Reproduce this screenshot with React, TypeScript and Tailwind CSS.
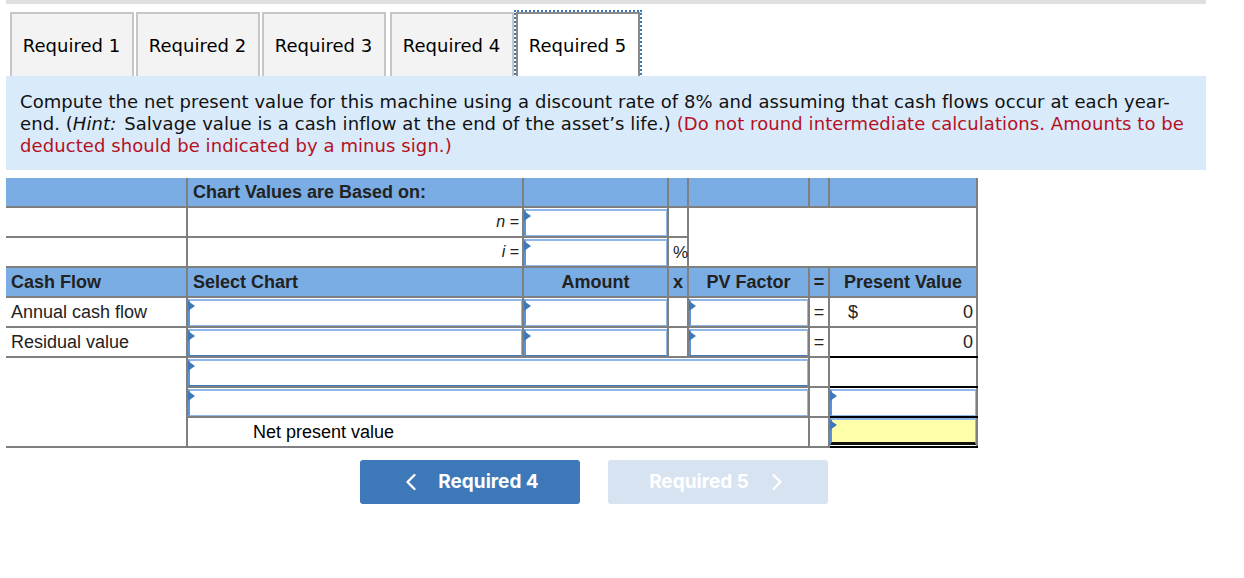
import React from "react";
import { ChevronLeft, ChevronRight } from "lucide-react";

const bd = "border-2 border-[#7f7f7f]";
const hd = "bg-[#7aade3] font-bold text-[#222]";

function Field({ yellow = false, dark = false }: { yellow?: boolean; dark?: boolean }) {
  return (
    <div
      className={`relative h-[27px] w-full border border-l-2 border-t-2 border-[#8fb8e8] border-l-[#5b93d3] ${yellow ? "border-b-[3px] border-b-[#111] bg-[#ffffaa]" : "bg-white"} ${dark && !yellow ? "border-b-[#3d78b8]" : ""}`}
    >
      <span className="absolute left-[-2px] top-[0px] h-0 w-0 border-y-[5px] border-l-[7px] border-y-transparent border-l-[#3d78b8]" />
    </div>
  );
}

function Tab({ label, active, ml = "" }: { label: string; active?: boolean; ml?: string }) {
  return (
    <div
      className={`flex h-[64px] w-[124px] items-center justify-center border-2 border-b-0 pr-[1px] text-[18px] text-black ${ml} ${
        active
          ? "border-[#8a8a8a] bg-white outline-2 outline-dotted outline-[#3d78b8]"
          : "border-[#c6c6c6] bg-[#f3f3f3]"
      }`}
    >
      {label}
    </div>
  );
}

export default function App() {
  return (
    <div className="h-[578px] w-[1244px] overflow-hidden bg-white pl-[6px] font-['DejaVu_Sans',Verdana,sans-serif]">
      <div className="h-[4px] w-[1200px] bg-[#e0e0e0]" />
      <div className="flex items-start pl-[4px] pt-[8px]">
        <Tab label="Required 1" />
        <Tab label="Required 2" ml="ml-[2px]" />
        <Tab label="Required 3" ml="ml-[2px]" />
        <Tab label="Required 4" ml="ml-[4px]" />
        <Tab label="Required 5" ml="ml-[2px]" active />
      </div>
      <div className="relative h-[94px] w-[1200px] whitespace-nowrap bg-[#d9eafa] px-[14px] pt-[15px] text-[18px] leading-[22px] tracking-[0.08px] text-[#111]">
        Compute the net present value for this machine using a discount rate of 8% and assuming that cash flows occur at each year-
        <br />
        end. (<i className="pr-[2px]">Hint:</i> Salvage value is a cash inflow at the end of the asset’s life.){" "}
        <span className="text-[#b5101e]">
          (Do not round intermediate calculations. Amounts to be
          <br />
          deducted should be indicated by a minus sign.)
        </span>
      </div>

      <table className="mt-[8px] w-[971px] table-fixed border-collapse font-['Liberation_Sans',Arial,sans-serif] text-[18px] leading-[22px] text-[#222]">
        <colgroup>
          <col className="w-[181px]" />
          <col className="w-[336px]" />
          <col className="w-[145px]" />
          <col className="w-[20px]" />
          <col className="w-[121px]" />
          <col className="w-[20px]" />
          <col className="w-[148px]" />
        </colgroup>
        <tbody>
          <tr className="h-[29px]">
            <td className={`${hd} border-b-2 border-r-2 border-[#7f7f7f] pl-[5px]`} />
            <td className={`${hd} ${bd} border-t-0 pl-[5px]`}>Chart Values are Based on:</td>
            <td className={`${hd} ${bd} border-t-0`} />
            <td className={`${hd} ${bd} border-t-0`} />
            <td className={`${hd} ${bd} border-t-0`} />
            <td className={`${hd} ${bd} border-t-0`} />
            <td className={`${hd} ${bd} border-t-0`} />
          </tr>
          <tr className="h-[30px]">
            <td className="border-y-2 border-r-2 border-[#7f7f7f]" />
            <td className={`${bd} pr-[3px] text-right text-[16px]`}><i>n</i> =</td>
            <td className={bd}><Field /></td>
            <td className={bd} />
            <td rowSpan={2} colSpan={3} className={bd} />
          </tr>
          <tr className="h-[30px]">
            <td className="border-y-2 border-r-2 border-[#7f7f7f]" />
            <td className={`${bd} pr-[3px] text-right text-[16px]`}><i>i</i> =</td>
            <td className={bd}><Field /></td>
            <td className={`${bd} whitespace-nowrap pl-[4px] pt-[2px] text-[17px]`}>%</td>
          </tr>
          <tr className="h-[30px]">
            <td className={`${hd} border-y-2 border-r-2 border-[#7f7f7f] pl-[5px]`}>Cash Flow</td>
            <td className={`${hd} ${bd} pl-[5px]`}>Select Chart</td>
            <td className={`${hd} ${bd} text-center`}>Amount</td>
            <td className={`${hd} ${bd} text-center`}>x</td>
            <td className={`${hd} ${bd} text-center`}>PV Factor</td>
            <td className={`${hd} ${bd} text-center`}>=</td>
            <td className={`${hd} ${bd} text-center`}>Present Value</td>
          </tr>
          <tr className="h-[30px]">
            <td className="border-y-2 border-r-2 border-[#7f7f7f] pl-[5px]">Annual cash flow</td>
            <td className={bd}><Field /></td>
            <td className={bd}><Field /></td>
            <td className={bd} />
            <td className={bd}><Field /></td>
            <td className={`${bd} text-center`}>=</td>
            <td className={`${bd} px-[3px]`}>
              <div className="flex justify-between pl-[15px]"><span>$</span><span>0</span></div>
            </td>
          </tr>
          <tr className="h-[30px]">
            <td className="border-y-2 border-r-2 border-[#7f7f7f] pl-[5px]">Residual value</td>
            <td className={bd}><Field dark /></td>
            <td className={bd}><Field dark /></td>
            <td className={bd} />
            <td className={bd}><Field dark /></td>
            <td className={`${bd} text-center`}>=</td>
            <td className="border-2 border-[#7f7f7f] border-b-[#000] px-[3px] text-right">0</td>
          </tr>
          <tr className="h-[30px]">
            <td rowSpan={3} className="border-y-2 border-r-2 border-[#7f7f7f]" />
            <td colSpan={4} className={bd}><Field dark /></td>
            <td className={bd} />
            <td className="border-2 border-x-[#7f7f7f] border-y-[#000]" />
          </tr>
          <tr className="h-[30px]">
            <td colSpan={4} className={bd}><Field /></td>
            <td className={bd} />
            <td className="border-2 border-x-[#7f7f7f] border-y-[#000]"><Field /></td>
          </tr>
          <tr className="h-[30px]">
            <td colSpan={4} className={`${bd} pl-[65px] text-black`}>Net present value</td>
            <td className={bd} />
            <td className="border-2 border-x-[#7f7f7f] border-b-[#000] border-t-[#000] align-top"><Field yellow /></td>
          </tr>
        </tbody>
      </table>

      <div className="ml-[354px] mt-[12px] flex gap-[28px] font-['Inter',sans-serif] text-[19px] font-bold text-white">
        <button className="flex h-[44px] w-[220px] items-center justify-center gap-[13px] rounded-[3px] bg-[#3d78b8]">
          <ChevronLeft size={28} strokeWidth={2} className="ml-[-4px]" />
          <span className="pt-[1px]">Required 4</span>
        </button>
        <button className="flex h-[44px] w-[220px] items-center justify-center gap-[14px] rounded-[3px] bg-[#d8e3f1]">
          <span className="pt-[1px]">Required 5</span>
          <ChevronRight size={28} strokeWidth={2} className="mr-[-4px]" />
        </button>
      </div>
    </div>
  );
}
